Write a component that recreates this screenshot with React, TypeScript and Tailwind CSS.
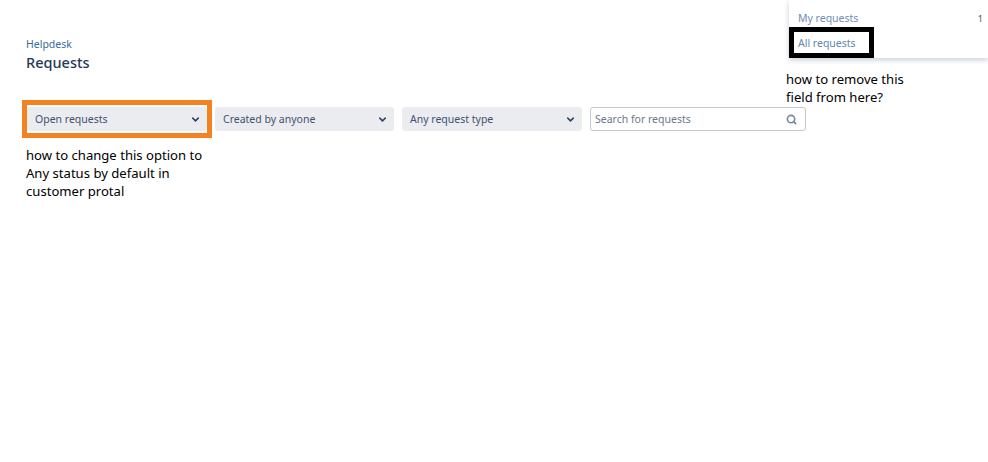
import { ChevronDown, Search } from 'lucide-react'

const font = "font-['Noto_Sans',sans-serif]"

function FilterSelect({ label, className }: { label: string; className: string }) {
  return (
    <div className={`flex h-[24px] items-center justify-between rounded-[3px] bg-[#ebecf0] pl-[8px] pr-[6px] ${className}`}>
      <span className="text-[10.5px] leading-none text-[#42526e]">{label}</span>
      <ChevronDown size={11} strokeWidth={3.5} className="text-[#344563]" />
    </div>
  )
}

function RequestsMenu() {
  return (
    <div className="absolute right-0 top-0 h-[58px] w-[199px] bg-white shadow-[0_2px_5px_rgba(9,30,66,0.22)]">
      <div className="flex h-[32px] items-center justify-between pl-[9px] pr-[5px] pt-[4px]">
        <span className="text-[10.5px] leading-none text-[#6f8db3]">My requests</span>
        <span className="text-[9px] leading-none text-[#42526e]">1</span>
      </div>
      <div className="absolute left-0 top-[27px] flex h-[31px] w-[85px] items-center border-[5px] border-black bg-white pl-[4px] pt-[2px]">
        <span className="text-[10.5px] leading-none text-[#5f86b3]">All requests</span>
      </div>
    </div>
  )
}

export default function App() {
  return (
    <div className={`relative h-[462px] w-[988px] overflow-hidden bg-white ${font}`}>
      <RequestsMenu />

      <div className="px-[26px] pt-[37px]">
        <div className="text-[10.5px] leading-[15px] text-[#3b6aa0]">Helpdesk</div>
        <h1 className="text-[14.5px] font-medium leading-[20px] text-[#253858]">Requests</h1>

        <div className="mt-[28px] flex items-start">
          <div className="ml-[-4px] border-[5px] border-[#f58220] px-0 py-[2px]">
            <FilterSelect label="Open requests" className="w-[180px]" />
          </div>
          <div className="flex gap-[8px] pl-[3px] pt-[7px]">
            <FilterSelect label="Created by anyone" className="w-[179px]" />
            <FilterSelect label="Any request type" className="w-[180px]" />
            <div className="flex h-[24px] w-[216px] items-center justify-between rounded-[3px] border border-[#c1c7d0] bg-white pl-[4px] pr-[8px]">
              <span className="text-[10.5px] leading-none text-[#6b778c]">Search for requests</span>
              <Search size={11} strokeWidth={3.5} className="text-[#7a869a]" />
            </div>
          </div>
        </div>

        <p className="mt-[8px] w-[190px] text-[13.1px] leading-[18px] text-black">
          how to change this option to Any status by default in customer protal
        </p>
      </div>

      <p className="absolute left-[786px] top-[70px] w-[140px] text-[13.1px] leading-[18px] text-black">
        how to remove this field from here?
      </p>
    </div>
  )
}
